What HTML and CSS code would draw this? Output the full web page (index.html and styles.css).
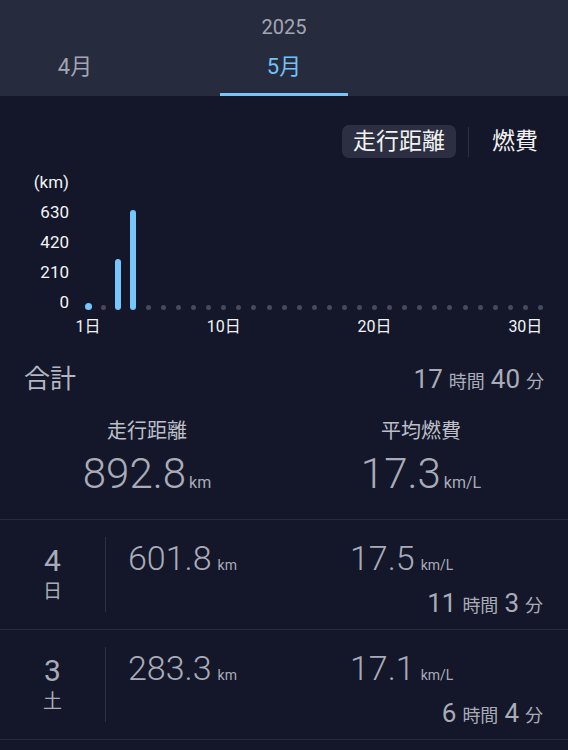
FILE: index.html
```html
<!DOCTYPE html>
<html lang="ja">

<head>
    <meta charset="UTF-8">
    <meta name="viewport" content="width=device-width, initial-scale=1.0">
    <title>走行履歴</title>
    <link rel="stylesheet" href="styles.css">
</head>

<body>
    <header class="month-bar">
        <div class="year">2025</div>
        <nav class="tabs">
            <div class="tab">4月</div>
            <div class="tab active">5月</div>
        </nav>
    </header>

    <main>
        <section class="chart-section">
            <div class="toggle">
                <span class="toggle-item selected">走行距離</span>
                <span class="toggle-sep"></span>
                <span class="toggle-item">燃費</span>
            </div>

            <div class="chart">
                <div class="y-axis">
                    <div>(km)</div>
                    <div>630</div>
                    <div>420</div>
                    <div>210</div>
                    <div>0</div>
                </div>
                <div class="plot">
                    <div class="day"><div class="bar" style="height: 7px; width: 7px;"></div></div>
                    <div class="day"><div class="dot"></div></div>
                    <div class="day"><div class="bar" style="height: 51px;"></div></div>
                    <div class="day"><div class="bar" style="height: 100px;"></div></div>
                    <div class="day"><div class="dot"></div></div>
                    <div class="day"><div class="dot"></div></div>
                    <div class="day"><div class="dot"></div></div>
                    <div class="day"><div class="dot"></div></div>
                    <div class="day"><div class="dot"></div></div>
                    <div class="day"><div class="dot"></div></div>
                    <div class="day"><div class="dot"></div></div>
                    <div class="day"><div class="dot"></div></div>
                    <div class="day"><div class="dot"></div></div>
                    <div class="day"><div class="dot"></div></div>
                    <div class="day"><div class="dot"></div></div>
                    <div class="day"><div class="dot"></div></div>
                    <div class="day"><div class="dot"></div></div>
                    <div class="day"><div class="dot"></div></div>
                    <div class="day"><div class="dot"></div></div>
                    <div class="day"><div class="dot"></div></div>
                    <div class="day"><div class="dot"></div></div>
                    <div class="day"><div class="dot"></div></div>
                    <div class="day"><div class="dot"></div></div>
                    <div class="day"><div class="dot"></div></div>
                    <div class="day"><div class="dot"></div></div>
                    <div class="day"><div class="dot"></div></div>
                    <div class="day"><div class="dot"></div></div>
                    <div class="day"><div class="dot"></div></div>
                    <div class="day"><div class="dot"></div></div>
                    <div class="day"><div class="dot"></div></div>
                    <div class="day"><div class="dot"></div></div>
                </div>
                <div class="x-axis">
                    <div class="x-label d1">1日</div>
                    <div class="x-label d10">10日</div>
                    <div class="x-label d20">20日</div>
                    <div class="x-label d30">30日</div>
                </div>
            </div>
        </section>

        <section class="summary">
            <div class="summary-head">
                <span class="summary-title">合計</span>
                <span class="duration">17<span class="time-unit">時間</span>40<span class="time-unit">分</span></span>
            </div>
            <div class="stats">
                <div class="stat">
                    <div class="stat-label">走行距離</div>
                    <div class="stat-value">892.8<span class="unit">km</span></div>
                </div>
                <div class="stat">
                    <div class="stat-label">平均燃費</div>
                    <div class="stat-value">17.3<span class="unit">km/L</span></div>
                </div>
            </div>
        </section>

        <ul class="days">
            <li class="row">
                <div class="row-date">
                    <span class="date-num">4</span>
                    <span class="date-week">日</span>
                </div>
                <div class="row-body">
                    <div class="row-value">601.8<span class="unit">km</span></div>
                    <div class="row-value">17.5<span class="unit">km/L</span></div>
                    <div class="row-time">11<span class="time-unit">時間</span>3<span class="time-unit">分</span></div>
                </div>
            </li>
            <li class="row">
                <div class="row-date">
                    <span class="date-num">3</span>
                    <span class="date-week">土</span>
                </div>
                <div class="row-body">
                    <div class="row-value">283.3<span class="unit">km</span></div>
                    <div class="row-value">17.1<span class="unit">km/L</span></div>
                    <div class="row-time">6<span class="time-unit">時間</span>4<span class="time-unit">分</span></div>
                </div>
            </li>
            <li class="row"></li>
        </ul>
    </main>
</body>

</html>
```

FILE: styles.css
```css
html,
body {
    margin: 0;
    background-color: #131729;
    font-family: Roboto, "Noto Sans CJK JP", sans-serif;
    color: #a9acb8;
}

/* month tabs */

.month-bar {
    height: 96px;
    box-sizing: border-box;
    padding-top: 12px;
    background-color: #272b3e;
}

.year {
    text-align: center;
    font-size: 20px;
    line-height: 30px;
    color: #a3a6b1;
}

.tabs {
    display: flex;
    gap: 81px;
    padding-left: 11px;
}

.tab {
    width: 128px;
    height: 54px;
    box-sizing: border-box;
    padding-top: 10px;
    text-align: center;
    font-size: 22px;
    line-height: 30px;
    color: #a3a6b1;
    border-bottom: 3px solid transparent;
}

.tab.active {
    color: #72c2f8;
    border-bottom-color: #76c5fb;
}

/* chart */

.chart-section {
    padding: 29px 19px 0 20px;
}

.toggle {
    display: flex;
    justify-content: flex-end;
    align-items: center;
}

.toggle-item {
    height: 33px;
    padding: 0 11px;
    font-size: 23px;
    line-height: 33px;
    color: #f2f2f2;
    border-radius: 7px;
}

.toggle-item.selected {
    background-color: #2b2f41;
}

.toggle-sep {
    width: 1px;
    height: 30px;
    margin: 0 12px;
    background-color: #2c3043;
}

.chart {
    display: grid;
    grid-template-columns: 49px 1fr;
    column-gap: 11.5px;
    margin-top: 8.5px;
    margin-right: 1px;
    color: #f4f4f6;
    font-size: 16px;
}

.y-axis {
    text-align: right;
    font-size: 17px;
    line-height: 30px;
}

.plot {
    display: grid;
    grid-template-columns: repeat(31, minmax(0, 1fr));
    padding-bottom: 6.5px;
}

.day {
    display: flex;
    justify-content: center;
    align-items: flex-end;
}

.dot {
    width: 5px;
    height: 5px;
    border-radius: 50%;
    background-color: #464a5c;
}

.bar {
    width: 6px;
    border-radius: 4px;
    background-color: #76c5fb;
}

.x-axis {
    grid-column: 2;
    display: grid;
    grid-template-columns: repeat(31, minmax(0, 1fr));
    line-height: 20px;
}

.x-label {
    display: flex;
    justify-content: center;
    white-space: nowrap;
    min-width: 0;
}

.d1 {
    grid-column: 1;
}

.d10 {
    grid-column: 10;
}

.d20 {
    grid-column: 20;
}

.d30 {
    grid-column: 30;
}

/* summary */

.summary {
    padding: 24px 0 21px;
}

.summary-head {
    display: flex;
    justify-content: space-between;
    align-items: baseline;
    padding: 0 24px;
    line-height: 37px;
}

.summary-title {
    font-size: 26px;
    color: #b3b6c0;
}

.duration {
    font-size: 26px;
    color: #a9acb8;
}

.time-unit {
    margin: 0 6px;
    font-size: 18px;
}

.time-unit:last-child {
    margin-right: 0;
}

.stats {
    display: flex;
    padding: 0 10px;
    margin-top: 17px;
}

.stat {
    flex: 1;
    text-align: center;
}

.stat-label {
    font-size: 20px;
    line-height: 28px;
    color: #bdbfc8;
}

.stat-value {
    margin-top: 5px;
    font-size: 42px;
    font-weight: 300;
    line-height: 48px;
}

.unit {
    margin-left: 3px;
    font-size: 16px;
    font-weight: 400;
    line-height: 1;
}

/* daily rows */

.days {
    list-style-type: none;
    margin: 0;
    padding: 0;
}

.row {
    display: flex;
    height: 110px;
    box-sizing: border-box;
    border-top: 1px solid #262a3c;
}

.row-date {
    width: 105px;
    margin: 17px 0;
    display: flex;
    flex-direction: column;
    justify-content: center;
    align-items: center;
    border-right: 1px solid #2c3043;
}

.date-num {
    font-size: 30px;
    line-height: 36px;
}

.date-week {
    font-size: 19px;
    line-height: 26px;
}

.row-body {
    flex: 1;
    display: grid;
    grid-template-columns: 222px 1fr;
    align-content: start;
    padding: 18px 25px 0 22px;
}

.row-value {
    font-size: 34px;
    font-weight: 300;
    line-height: 40px;
}

.row-value .unit {
    margin-left: 6px;
    font-size: 14px;
}

.row-time {
    grid-column: 1 / -1;
    margin-top: 10px;
    text-align: right;
    font-size: 26px;
    line-height: 30px;
}
```
